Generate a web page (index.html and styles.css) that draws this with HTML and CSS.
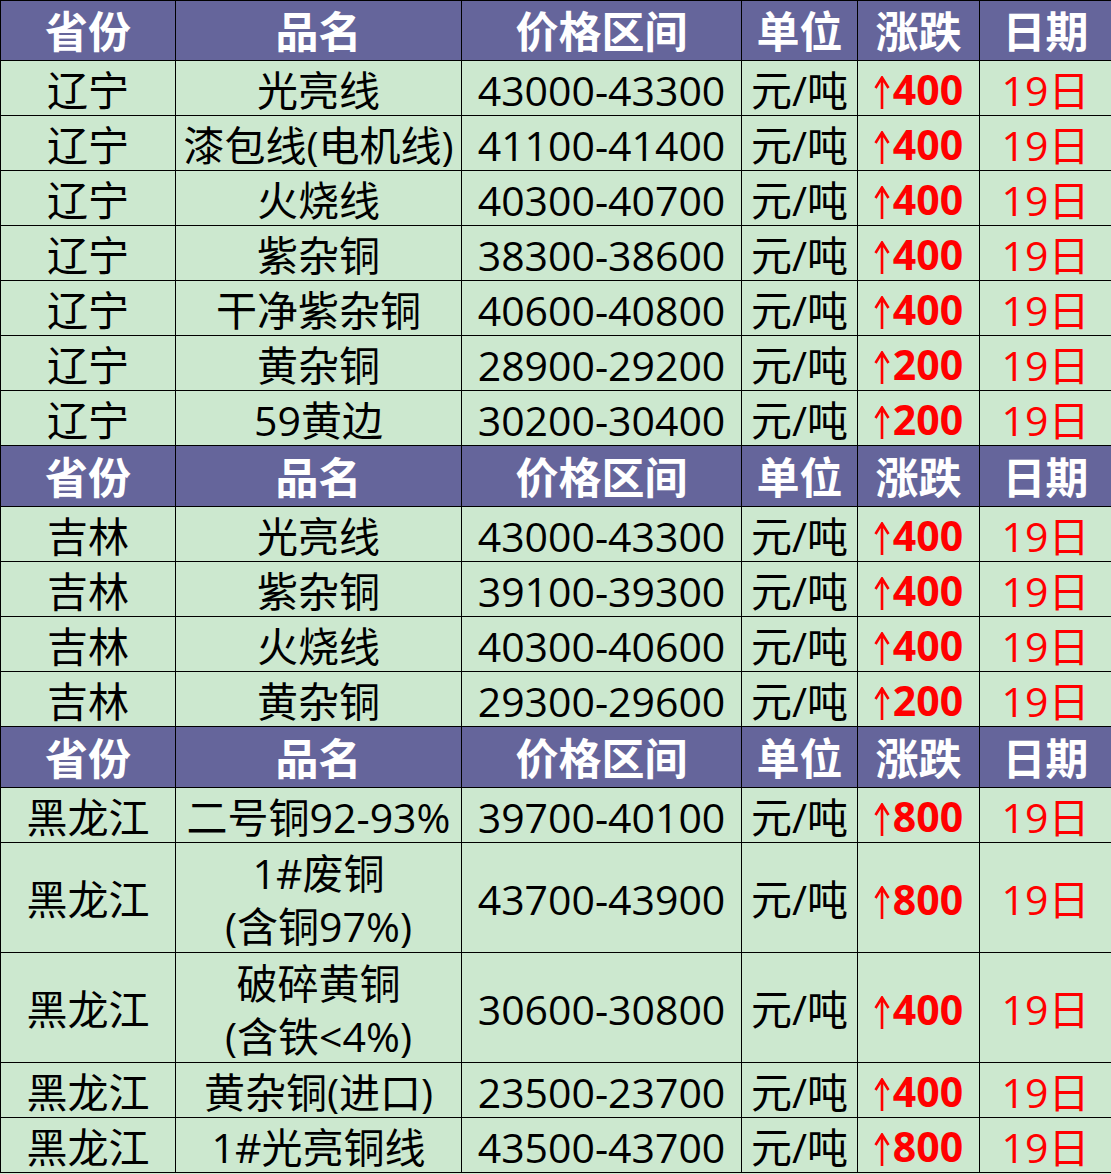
FILE: index.html
```html
<!DOCTYPE html>
<html lang="zh-CN">
<head>
<meta charset="utf-8">
<title>价格表</title>
<link rel="stylesheet" href="styles.css">
</head>
<body>
<table class="price">
<colgroup>
<col class="c1"><col class="c2"><col class="c3"><col class="c4"><col class="c5"><col class="c6">
</colgroup>
<tbody>
<tr class="hd first"><th><span class="ht">省份</span></th><th><span class="ht">品名</span></th><th><span class="ht">价格区间</span></th><th><span class="ht">单位</span></th><th><span class="ht">涨跌</span></th><th><span class="ht">日期</span></th></tr>
<tr class="r"><td>辽宁</td><td>光亮线</td><td>43000-43300</td><td>元/吨</td><td class="up"><svg class="ar" viewBox="0 0 16 34"><path d="M8 2V33M1.5 12L8 1.5L14.5 12"/></svg>400</td><td class="dt">19日</td></tr>
<tr class="r"><td>辽宁</td><td>漆包线(电机线)</td><td>41100-41400</td><td>元/吨</td><td class="up"><svg class="ar" viewBox="0 0 16 34"><path d="M8 2V33M1.5 12L8 1.5L14.5 12"/></svg>400</td><td class="dt">19日</td></tr>
<tr class="r"><td>辽宁</td><td>火烧线</td><td>40300-40700</td><td>元/吨</td><td class="up"><svg class="ar" viewBox="0 0 16 34"><path d="M8 2V33M1.5 12L8 1.5L14.5 12"/></svg>400</td><td class="dt">19日</td></tr>
<tr class="r"><td>辽宁</td><td>紫杂铜</td><td>38300-38600</td><td>元/吨</td><td class="up"><svg class="ar" viewBox="0 0 16 34"><path d="M8 2V33M1.5 12L8 1.5L14.5 12"/></svg>400</td><td class="dt">19日</td></tr>
<tr class="r"><td>辽宁</td><td>干净紫杂铜</td><td>40600-40800</td><td>元/吨</td><td class="up"><svg class="ar" viewBox="0 0 16 34"><path d="M8 2V33M1.5 12L8 1.5L14.5 12"/></svg>400</td><td class="dt">19日</td></tr>
<tr class="r"><td>辽宁</td><td>黄杂铜</td><td>28900-29200</td><td>元/吨</td><td class="up"><svg class="ar" viewBox="0 0 16 34"><path d="M8 2V33M1.5 12L8 1.5L14.5 12"/></svg>200</td><td class="dt">19日</td></tr>
<tr class="r"><td>辽宁</td><td>59黄边</td><td>30200-30400</td><td>元/吨</td><td class="up"><svg class="ar" viewBox="0 0 16 34"><path d="M8 2V33M1.5 12L8 1.5L14.5 12"/></svg>200</td><td class="dt">19日</td></tr>
<tr class="hd"><th><span class="ht">省份</span></th><th><span class="ht">品名</span></th><th><span class="ht">价格区间</span></th><th><span class="ht">单位</span></th><th><span class="ht">涨跌</span></th><th><span class="ht">日期</span></th></tr>
<tr class="r"><td>吉林</td><td>光亮线</td><td>43000-43300</td><td>元/吨</td><td class="up"><svg class="ar" viewBox="0 0 16 34"><path d="M8 2V33M1.5 12L8 1.5L14.5 12"/></svg>400</td><td class="dt">19日</td></tr>
<tr class="r"><td>吉林</td><td>紫杂铜</td><td>39100-39300</td><td>元/吨</td><td class="up"><svg class="ar" viewBox="0 0 16 34"><path d="M8 2V33M1.5 12L8 1.5L14.5 12"/></svg>400</td><td class="dt">19日</td></tr>
<tr class="r"><td>吉林</td><td>火烧线</td><td>40300-40600</td><td>元/吨</td><td class="up"><svg class="ar" viewBox="0 0 16 34"><path d="M8 2V33M1.5 12L8 1.5L14.5 12"/></svg>400</td><td class="dt">19日</td></tr>
<tr class="r"><td>吉林</td><td>黄杂铜</td><td>29300-29600</td><td>元/吨</td><td class="up"><svg class="ar" viewBox="0 0 16 34"><path d="M8 2V33M1.5 12L8 1.5L14.5 12"/></svg>200</td><td class="dt">19日</td></tr>
<tr class="hd"><th><span class="ht">省份</span></th><th><span class="ht">品名</span></th><th><span class="ht">价格区间</span></th><th><span class="ht">单位</span></th><th><span class="ht">涨跌</span></th><th><span class="ht">日期</span></th></tr>
<tr class="r"><td>黑龙江</td><td>二号铜92-93%</td><td>39700-40100</td><td>元/吨</td><td class="up"><svg class="ar" viewBox="0 0 16 34"><path d="M8 2V33M1.5 12L8 1.5L14.5 12"/></svg>800</td><td class="dt">19日</td></tr>
<tr class="r2"><td>黑龙江</td><td><div class="ln">1#废铜</div><div class="ln">(含铜97%)</div></td><td>43700-43900</td><td>元/吨</td><td class="up"><svg class="ar" viewBox="0 0 16 34"><path d="M8 2V33M1.5 12L8 1.5L14.5 12"/></svg>800</td><td class="dt">19日</td></tr>
<tr class="r2"><td>黑龙江</td><td><div class="ln">破碎黄铜</div><div class="ln">(含铁&lt;4%)</div></td><td>30600-30800</td><td>元/吨</td><td class="up"><svg class="ar" viewBox="0 0 16 34"><path d="M8 2V33M1.5 12L8 1.5L14.5 12"/></svg>400</td><td class="dt">19日</td></tr>
<tr class="r"><td>黑龙江</td><td>黄杂铜(进口)</td><td>23500-23700</td><td>元/吨</td><td class="up"><svg class="ar" viewBox="0 0 16 34"><path d="M8 2V33M1.5 12L8 1.5L14.5 12"/></svg>400</td><td class="dt">19日</td></tr>
<tr class="r"><td>黑龙江</td><td>1#光亮铜线</td><td>43500-43700</td><td>元/吨</td><td class="up"><svg class="ar" viewBox="0 0 16 34"><path d="M8 2V33M1.5 12L8 1.5L14.5 12"/></svg>800</td><td class="dt">19日</td></tr>
</tbody>
</table>
</body>
</html>
```
FILE: styles.css
```css
html, body {
  margin: 0;
  padding: 0;
  background: #cce8cf;
}

.price {
  width: 1111px;
  border-collapse: collapse;
  table-layout: fixed;
  font-family: "Open Sans", "Noto Sans CJK SC", sans-serif;
  color: #000;
}

.c1 { width: 175px; }
.c2 { width: 286px; }
.c3 { width: 280px; }
.c4 { width: 116px; }
.c5 { width: 122px; }
.c6 { width: 132px; }

.price th,
.price td {
  border: 1px solid #000;
  padding: 0;
  text-align: center;
  vertical-align: middle;
  white-space: nowrap;
}

.price td {
  background: #cce8cf;
  font-size: 41px;
  line-height: 40px;
  font-weight: 400;
  padding-top: 3px;
}

.price th {
  background: #65659b;
  color: #fff;
  font-family: "Noto Sans CJK SC", sans-serif;
  font-size: 43px;
  font-weight: 700;
  line-height: 44px;
  padding-bottom: 3px;
}

.ht {
  display: inline-block;
  height: 44px;
  line-height: 44px;
  vertical-align: top;
}

.hd { height: 61px; }
.hd.first { height: 60px; }
.r { height: 55px; }
.r2 { height: 110px; }

.ln {
  height: 53px;
  display: flex;
  align-items: center;
  justify-content: center;
}

.price td.up {
  color: #ff0000;
  font-weight: 700;
}

.ar {
  width: 16px;
  height: 34px;
  margin-right: 3px;
  vertical-align: -5px;
  fill: none;
  stroke: #ff0000;
  stroke-width: 2.6;
  stroke-linejoin: miter;
}

.price td.dt {
  color: #ff0000;
}
```
